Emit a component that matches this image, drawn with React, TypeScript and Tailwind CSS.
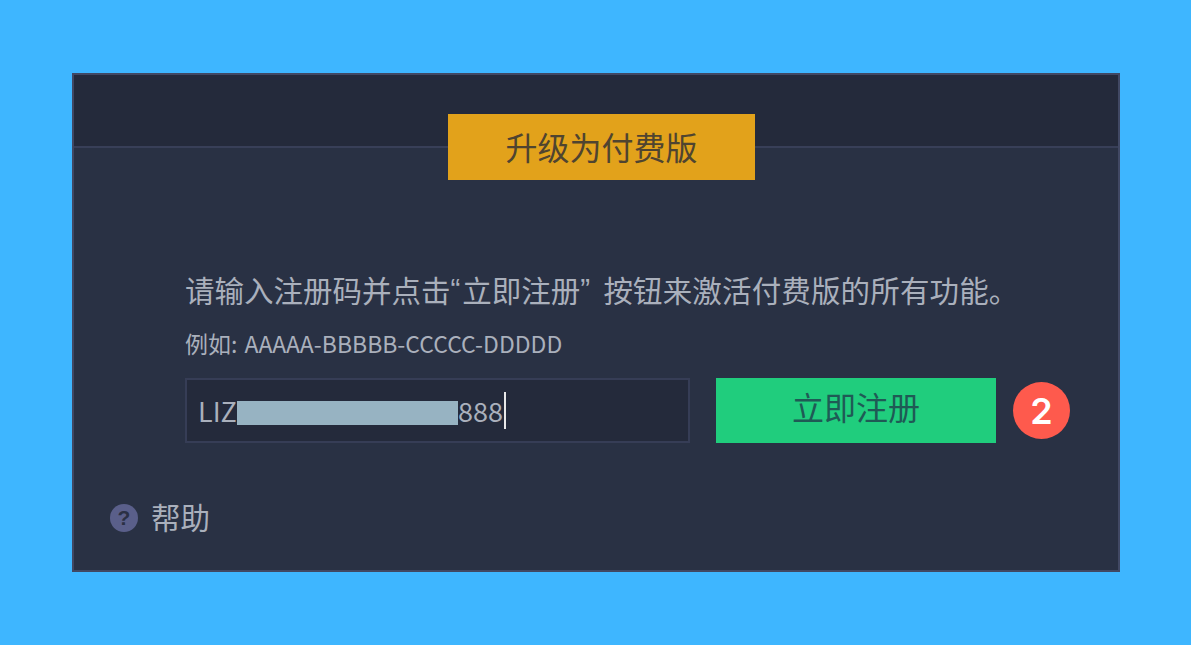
export default function App() {
  const font = { fontFamily: '"Noto Sans CJK SC", "Noto Sans", sans-serif' };
  const quote = { fontFamily: '"Liberation Sans", sans-serif' };
  return (
    <div className="w-[1191px] h-[645px] bg-[#3eb6ff] pt-[73px] pl-[72px] overflow-hidden" style={font}>
      <div className="w-[1048px] h-[499px] border-2 border-[#414863] bg-[#293144] flex flex-col">
        <div className="h-[73px] shrink-0 bg-[#242a3b] border-b-2 border-[#383f58] flex justify-center items-start pt-[39px] pl-[11px]">
          <div className="relative w-[307px] h-[66px] pb-[2px] shrink-0 bg-[#e2a21b] flex items-center justify-center text-[32px] text-[#4f4430]">
            升级为付费版
          </div>
        </div>
        <div className="flex-1 flex flex-col pl-[111px]">
          <p className="mt-[115px] h-[52px] flex items-center text-[29.5px] text-[#aab0bc] whitespace-pre">
            <span>请输入注册码并点击</span>
            <span style={quote}>“</span>
            <span className="ml-[2px]">立即注册</span>
            <span className="mr-[5px]" style={quote}>” </span>
            <span className="tracking-[0.15px]">按钮来激活付费版的所有功能。</span>
          </p>
          <p className="mt-[12px] h-[32px] flex items-center text-[23px] text-[#aab0bc] whitespace-pre">
            <span className="mr-[2px]">例如:</span>
            <span> AAAAA-BBBBB-CCCCC-DDDDD</span>
          </p>
          <div className="mt-[19px] flex items-center">
            <div className="w-[505px] h-[65px] border-2 border-[#363d56] bg-[#242a3b] flex items-center pl-[11px] pt-[2px] text-[27px] text-[#aab0bc]">
              <span className="w-[39px]">LIZ</span>
              <span className="w-[221px] h-[24px] mt-[2px] bg-[#97b3c2]"></span>
              <span>888</span>
              <span className="w-[2px] h-[37px] -mt-[2px] bg-[#e8e8e8] ml-[1px]"></span>
            </div>
            <button className="ml-[26px] w-[280px] h-[65px] pb-[10px] bg-[#20cd7d] text-[#1f5a55] text-[32px] flex items-center justify-center">
              立即注册
            </button>
            <div className="ml-[17px] w-[57px] h-[57px] rounded-full bg-[#fe5a4d] text-white text-[36px] font-semibold flex items-center justify-center" style={{ fontFamily: 'Inter, sans-serif' }}>
              2
            </div>
          </div>
          <div className="-ml-[75px] mt-[51px] flex items-center">
            <div className="w-[28px] h-[28px] rounded-full bg-[#5a5f8a] text-[#2a3044] text-[21px] font-bold flex items-center justify-center" style={quote}>
              ?
            </div>
            <span className="ml-[13px] mb-[4px] text-[29.5px] text-[#aab0bc]">帮助</span>
          </div>
        </div>
      </div>
    </div>
  );
}
